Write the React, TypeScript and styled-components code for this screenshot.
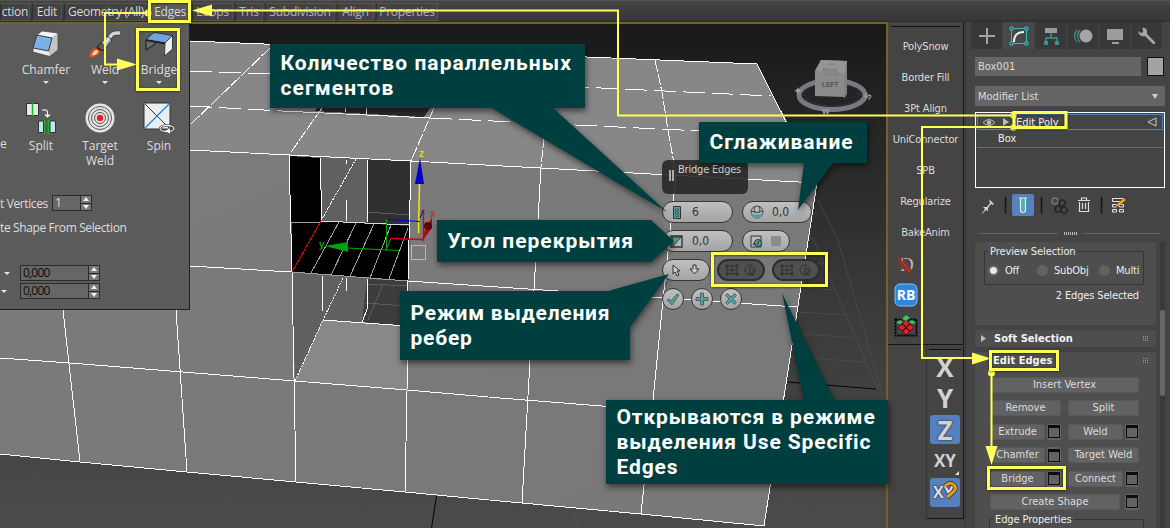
import React from "react";
import styled, { createGlobalStyle } from "styled-components";

const Global = createGlobalStyle`
  * { box-sizing: border-box; }
  body { margin: 0; background: #444; overflow: hidden; }
`;

const segoe = `"Open Sans", "Noto Sans", sans-serif`;
const tahoma = `"DejaVu Sans Condensed", "DejaVu Sans", sans-serif`;
const yellow = "#ffff57";
const teal = "#003f3f";

const Page = styled.div`
  position: relative;
  width: 1170px;
  height: 528px;
  overflow: hidden;
  display: flex;
  flex-direction: column;
  background: #444;
  color: #dcdcdc;
  font: 11px ${tahoma};
`;

/* ---------- ribbon ---------- */
const Ribbon = styled.div`
  height: 22px;
  flex: none;
  display: flex;
  gap: 2px;
  padding-top: 2px;
  background: linear-gradient(#454545, #363636);
  border-top: 1px solid #555;
  border-bottom: 1px solid #2c2c2c;
`;
const RibbonTab = styled.div<{ $w: number; $on?: boolean; $dim?: boolean }>`
  width: ${(p) => p.$w}px;
  height: 18px;
  border: 1px solid #545454;
  border-left-color: #2f2f2f;
  background: ${(p) => (p.$on ? "#5c5c5c" : "#424242")};
  color: ${(p) => (p.$dim ? "#b4b4b4" : "#d8d8d8")};
  font: 12px/16px ${segoe};
  letter-spacing: -0.25px;
  text-align: center;
  white-space: nowrap;
`;
const Body = styled.div`
  flex: 1;
  min-height: 0;
  display: flex;
`;

/* ---------- viewport ---------- */
const Viewport = styled.div`
  position: relative;
  width: 888px;
  flex: none;
  overflow: hidden;
  border-top: 2px solid #756326;
  border-right: 2px solid #756326;
`;
const Scene = styled.svg`
  position: absolute;
  left: 0;
  top: -24px;
`;
const RibbonPanel = styled.div`
  position: absolute;
  left: 0;
  top: -2px;
  width: 190px;
  height: 288px;
  display: flex;
  flex-direction: column;
  background: #5b5b5b;
  border-right: 1px solid #1f1f1f;
  border-bottom: 1px solid #1f1f1f;
  font: 12px/15px ${segoe};
  color: #dedede;
`;
const ToolRow = styled.div<{ $h: number; $cols: string; $top: number }>`
  display: grid;
  grid-template-columns: ${(p) => p.$cols};
  height: ${(p) => p.$h}px;
  padding-top: ${(p) => p.$top}px;
`;
const Tool = styled.div`
  display: flex;
  flex-direction: column;
  align-items: center;
  text-align: center;
  gap: 4px;
`;
const Down = styled.i`
  width: 0;
  border: 3px solid transparent;
  border-top-color: #e4e4e4;
  border-bottom: 0;
`;
const Clipped = styled.div`
  padding-top: 34px;
`;
const FieldLine = styled.div<{ $h: number; $gap?: number; $pad?: number }>`
  display: flex;
  align-items: center;
  height: ${(p) => p.$h}px;
  gap: ${(p) => p.$gap ?? 0}px;
  padding-left: ${(p) => p.$pad ?? 0}px;
  white-space: nowrap;
  letter-spacing: -0.38px;
`;
const Spinner = styled.div<{ $w: number; $dark?: boolean }>`
  width: ${(p) => p.$w}px;
  height: 16px;
  display: flex;
  border: 1px solid #2b2b2b;
  background: #666;
  color: ${(p) => (p.$dark ? "#0c0c0c" : "#dedede")};
  font: 12px/14px ${segoe};
  letter-spacing: -0.9px;
  letter-spacing: -0.8px;
  padding-left: 2px;
  justify-content: space-between;
`;
const Steps = styled.div`
  width: 11px;
  border-left: 1px solid #2b2b2b;
  display: flex;
  flex-direction: column;
  background: #777;
`;
const Step = styled.span<{ $down?: boolean }>`
  flex: 1;
  display: flex;
  align-items: center;
  justify-content: center;
  border-bottom: ${(p) => (p.$down ? "0" : "1px solid #2b2b2b")};
  &::after {
    content: "";
    border: 3px solid transparent;
    border-${(p) => (p.$down ? "top" : "bottom")}: 4px solid #eee;
    border-${(p) => (p.$down ? "bottom" : "top")}: 0;
  }
`;

/* ---------- caddy ---------- */
const Caddy = styled.div`
  position: absolute;
  left: 662px;
  top: 136px;
  width: 160px;
  display: flex;
  flex-direction: column;
  gap: 7px;
`;
const CaddyTitle = styled.div`
  width: 86px;
  height: 34px;
  border-radius: 6px;
  background: rgba(38, 38, 38, 0.88);
  color: #d5d5d5;
  font: 11px/19px ${tahoma};
  letter-spacing: -0.2px;
  white-space: nowrap;
  display: flex;
  gap: 4px;
  padding-left: 7px;
`;
const Grip = styled.i`
  width: 5px;
  height: 11px;
  margin-top: 10px;
  border: solid #aaa;
  border-width: 0 2px;
`;
const PillRow = styled.div<{ $gap: number }>`
  display: flex;
  gap: ${(p) => p.$gap}px;
`;
const Pill = styled.div<{ $w: number; $off?: boolean; $gap?: number }>`
  width: ${(p) => p.$w}px;
  height: 22px;
  border-radius: 11px;
  border: ${(p) => (p.$off ? "2px solid #2d2d2d" : "1px solid #363636")};
  background: ${(p) => (p.$off ? "#505050" : "linear-gradient(#c0c0c0, #a4a4a4)")};
  color: #333;
  display: flex;
  align-items: center;
  justify-content: ${(p) => (p.$gap ? "flex-start" : "space-evenly")};
  gap: ${(p) => p.$gap ?? 0}px;
  padding-left: ${(p) => (p.$gap ? (p.$gap > 9 ? 10 : 7) : 0)}px;
  font: 12px/20px ${tahoma};
`;

/* ---------- callouts ---------- */
const Note = styled.div<{ $x: number; $y: number; $w: number; $h: number; $ls: number }>`
  position: absolute;
  left: ${(p) => p.$x}px;
  top: ${(p) => p.$y}px;
  width: ${(p) => p.$w}px;
  height: ${(p) => p.$h}px;
  display: flex;
  align-items: center;
  padding-left: 10.5px;
  background: ${teal};
  color: #fff;
  font: bold 21px/25px Roboto, sans-serif;
  letter-spacing: ${(p) => p.$ls}px;
  white-space: pre;
`;
const Overlay = styled.svg<{ $shadow?: boolean }>`
  position: absolute;
  left: 0;
  top: 0;
  pointer-events: none;
  filter: ${(p) => (p.$shadow ? "drop-shadow(1px 3px 3px rgba(0, 0, 0, 0.55))" : "none")};
`;

/* ---------- script toolbars ---------- */
const Bars = styled.div`
  width: 77px;
  flex: none;
  display: flex;
  flex-direction: column;
  align-items: flex-end;
  padding-right: 1px;
  background: #444;
`;
const ScriptBar = styled.div`
  width: 76px;
  height: 323px;
  flex: none;
  border-right: 1px solid #161616;
  border-bottom: 1px solid #161616;
  padding: 4px 3px 0;
  display: flex;
  flex-direction: column;
`;
const Rule = styled.div`
  height: 1px;
  align-self: stretch;
  flex: none;
  background: #111;
`;
const Scripts = styled.div`
  padding-top: 4px;
  height: 217px;
  flex: none;
`;
const Script = styled.div`
  height: 31px;
  line-height: 31px;
  text-align: center;
  white-space: nowrap;
  letter-spacing: -0.15px;
`;
const ScriptIcon = styled.div`
  height: 31px;
  flex: none;
  display: flex;
  align-items: center;
  padding: 8px 0 0 3px;
`;
const AxisBar = styled.div`
  width: 38px;
  height: 173px;
  margin-top: 1px;
  border: solid #161616;
  border-width: 0 1px 1px;
  border-left-color: #353535;
  display: flex;
  flex-direction: column;
  align-items: center;
  padding: 3px 2px 0;
`;
const Axis = styled.div<{ $on?: boolean; $small?: boolean }>`
  width: 30px;
  height: 29px;
  margin-top: 2.4px;
  flex: none;
  border-radius: 3px;
  background: ${(p) => (p.$on ? "#5480bd" : "transparent")};
  color: #d2d2d2;
  display: flex;
  justify-content: center;
  align-items: center;
  font: ${(p) => (p.$small ? "bold 17px/20px" : "bold 26px/28px")} "Open Sans", sans-serif;
  text-shadow: ${(p) => (p.$on ? "0 0 2px #222, 0 0 1px #222" : "none")};
`;
const Flyout = styled.i`
  position: absolute;
  right: -2px;
  bottom: 0;
  border: 2px solid #ddd;
  border-top-color: transparent;
  border-left-color: transparent;
`;
const AxisCorner = styled.span`
  position: relative;
  padding: 4px 1px;
`;

/* ---------- command panel ---------- */
const Command = styled.div`
  width: 205px;
  flex: none;
  display: flex;
  flex-direction: column;
  padding: 0 5px;
  border-left: 1px solid #363636;
  background: #444;
`;
const Tabs = styled.div`
  height: 27px;
  display: flex;
  gap: 1px;
  background: #444;
`;
const Tab = styled.div<{ $on?: boolean }>`
  width: 31px;
  display: flex;
  align-items: center;
  justify-content: center;
  background: ${(p) => (p.$on ? "#484848" : "#383838")};
`;
const NameRow = styled.div<{ $top: number }>`
  display: flex;
  justify-content: space-between;
  margin: ${(p) => p.$top}px 0 0 4px;
`;
const Field = styled.div<{ $w: number; $h: number }>`
  width: ${(p) => p.$w}px;
  height: ${(p) => p.$h}px;
  display: flex;
  align-items: center;
  justify-content: space-between;
  padding: 0 7px 0 3px;
  background: #656565;
`;
const Pick = styled.i`
  border: 3.5px solid transparent;
  border-top: 5px solid #d0d0d0;
  border-bottom: 0;
`;
const Swatch = styled.div`
  width: 17px;
  height: 19px;
  margin-right: 1px;
  background: #a3a3a3;
  border: 1px solid #111;
`;
const Stack = styled.div`
  width: 190px;
  height: 76px;
  margin: 6px 0 0 4px;
  border: 1px solid #fff;
  background: #454545;
  padding: 1px;
  color: #f0f0f0;
`;
const StackTop = styled.div`
  height: 16px;
  border: 1px solid #4f7fb9;
  display: flex;
  align-items: center;
  padding-left: 4px;
  gap: 7px;
  & > :last-child { margin-left: auto; margin-right: 5px; }
`;
const StackItem = styled.div`
  height: 18px;
  line-height: 18px;
  padding-left: 21px;
  border-bottom: 1px solid #6a6a6a;
`;
const StackTools = styled.div`
  height: 42px;
  flex: none;
  padding-top: 2px;
`;
const Split = styled.div`
  height: 6px;
  margin: 0 4px 0 8px;
  display: flex;
  align-items: center;
  gap: 6px;
  &::before, &::after { content: ""; flex: 1; height: 1px; background: #626262; }
`;
const Dots = styled.i`
  width: 13px;
  height: 3px;
  background: repeating-linear-gradient(90deg, #bbb 0 1px, transparent 1px 2px);
`;
const Scroller = styled.div`
  flex: 1;
  min-height: 0;
  display: flex;
  gap: 3px;
  margin: 5px 0 0 3px;
`;
const Rollouts = styled.div`
  width: 183px;
  display: flex;
  flex-direction: column;
  gap: 3px;
`;
const Track = styled.div`
  width: 6px;
  border-radius: 3px;
  background: #393939;
  padding-top: 69px;
`;
const Thumb = styled.div`
  width: 5px;
  height: 86px;
  border-radius: 2px;
  background: #666;
`;
const Rollout = styled.div<{ $h: number }>`
  height: ${(p) => p.$h}px;
  flex: none;
  overflow: hidden;
  border: 1px solid #424242;
  border-radius: 2px;
  background: #4e4e4e;
`;
const Group = styled.fieldset<{ $h: number; $pad: number; $left: number }>`
  height: ${(p) => p.$h}px;
  margin: ${(p) => p.$pad}px 12px 0 ${(p) => p.$left}px;
  padding: 0 4px 0 3px;
  min-width: 0;
  border: 1px solid #343434;
  border-radius: 2px;
  color: #ececec;
`;
const Legend = styled.legend`
  padding: 0 2px;
  line-height: 13px;
  letter-spacing: -0.1px;
`;
const Radios = styled.div`
  display: grid;
  grid-template-columns: 49px 62px auto;
  height: 24px;
  align-items: center;
`;
const Radio = styled.span<{ $on?: boolean }>`
  display: flex;
  align-items: center;
  gap: 6px;
  letter-spacing: -0.2px;
  &::before {
    content: "";
    width: 11px;
    height: 11px;
    border-radius: 50%;
    background: ${(p) => (p.$on ? "radial-gradient(#e8e8e8 0 3px, #666 4px)" : "#626262")};
  }
`;
const Picked = styled.div`
  text-align: right;
  padding: 4px 17px 0 0;
  letter-spacing: -0.15px;
  color: #eee;
`;
const Heading = styled.div<{ $indent: number }>`
  height: 17px;
  display: flex;
  align-items: center;
  gap: 8px;
  padding: 0 7px 0 ${(p) => p.$indent}px;
  font: bold 11px ${tahoma};
  color: #f4f4f4;
  letter-spacing: 0.05px;
  & > :last-child { margin-left: auto; }
`;
const Buttons = styled.div`
  margin: 8px 17px 0 15px;
  display: grid;
  grid-template-columns: 71px 71px;
  column-gap: 7px;
  row-gap: 7.4px;
`;
const Cell = styled.div<{ $wide?: boolean }>`
  display: flex;
  gap: ${(p) => (p.$wide ? 5 : 2)}px;
  grid-column: ${(p) => (p.$wide ? "1 / -1" : "auto")};
`;
const Button = styled.div`
  flex: 1;
  height: 16px;
  border-radius: 2px;
  background: #626262;
  border: 1px solid #595959;
  line-height: 14px;
  text-align: center;
  white-space: nowrap;
  color: #dcdcdc;
`;
const Settings = styled.div`
  width: 14px;
  height: 16px;
  border-radius: 2px;
  background: #626262;
  display: flex;
  align-items: center;
  justify-content: center;
  &::before {
    content: "";
    width: 10px;
    height: 9px;
    border: 1px solid #0c0c0c;
    border-top-width: 3px;
  }
`;

const Spin = ({ w, dark, children }: { w: number; dark?: boolean; children: React.ReactNode }) => (
  <Spinner $w={w} $dark={dark}>
    {children}
    <Steps><Step /><Step $down /></Steps>
  </Spinner>
);

const HeadDots = () => (
  <svg width="6" height="5" shapeRendering="crispEdges">
    <path d="M0 .5h6M0 2.500h6M0 4.500h6" stroke="#9c9c9c" strokeDasharray="1 1" />
  </svg>
);

const ChamferIcon = () => (
  <svg width="28" height="28" viewBox="0 0 28 28">
    <path d="M5 5l5-4 16 2-6 5z" fill="#f6f6f6" />
    <path d="M20 8l6-5v17l-8 6-1-6z" fill="#c4c4c4" />
    <path d="M1 18l16 3 1 5.500L1 22z" fill="#eee" />
    <path d="M5 5l15 3-3.500 13L1 18z" fill="#78b0e8" stroke="#333" strokeWidth=".9" />
    <path d="M5 5l5-4 16 2v17l-8 6.500L1 22v-4" fill="none" stroke="#444" strokeWidth=".7" />
  </svg>
);
const WeldIcon = () => (
  <svg width="34" height="28" viewBox="0 0 34 28">
    <path d="M32 3c-7-.5-9 1-11 6" fill="none" stroke="#3a3f43" strokeWidth="5" />
    <path d="M32 3c-7-.5-9 1-11 6" fill="none" stroke="#cfd6da" strokeWidth="3.500" />
    <path d="M19 6l5 4-6 8-6-4z" fill="#a9b3ba" stroke="#333" />
    <path d="M21 8l-6 8" stroke="#eef2f4" strokeWidth="1.500" />
    <path d="M13 13l5 4-3 4-6-4z" fill="#565c60" stroke="#222" />
    <path d="M9 17l4 3-1 2-5-2z" fill="#26292b" />
    <path d="M1 27.500c1-7 5-10 8-9l3.500 2.500c-1 4-5 6-11.500 6.500z" fill="#e9501f" />
    <path d="M4 25.500c1-4 3-6 6-5 0 3-2 4.500-6 5z" fill="#fbd9a0" />
  </svg>
);
const BridgeIcon = () => (
  <svg width="30" height="28" viewBox="0 0 30 28">
    <path d="M2 9.500v10.500l9-6v-4z" fill="#6c6c6c" stroke="#161616" />
    <path d="M2 9.500l8-7 18.500 3-7.500 7.500z" fill="#6fa6de" stroke="#222" strokeWidth=".8" />
    <path d="M21 13l7.500-7.500v13.500l-8 7z" fill="#efefef" stroke="#222" strokeWidth=".8" />
    <path d="M2 9.500l19 3v2L2 11z" fill="#222" />
  </svg>
);
const SplitIcon = () => (
  <svg width="32" height="32" viewBox="0 0 32 32">
    <rect x="1.500" y="1.500" width="12" height="12" fill="#e8e8e8" stroke="#333" />
    <path d="M7.500 1v13M19.500 18v14M23.500 18v14" stroke="#17b81f" strokeWidth="1.500" />
    <path d="M13.500 19h5v11.500h-5zM25 19h5.500v11.500H25z" fill="#bfe6f4" stroke="#333" />
    <path d="M17 8h3.500q2 0 2 3v4M20 12.500l2.500 2.500 2.500-2.500" fill="none" stroke="#fff" strokeWidth="1.200" />
  </svg>
);
const TargetIcon = () => (
  <svg width="32" height="32" viewBox="0 0 32 32">
    <circle cx="16" cy="16" r="14.500" fill="#e6e6e6" />
    <circle cx="16" cy="16" r="11.500" fill="none" stroke="#555" />
    <circle cx="16" cy="16" r="8.500" fill="none" stroke="#555" />
    <circle cx="16" cy="16" r="5.500" fill="none" stroke="#555" />
    <circle cx="16" cy="16" r="3.200" fill="#e32222" />
  </svg>
);
const SpinIcon = () => (
  <svg width="32" height="32" viewBox="0 0 32 32">
    <rect x="1" y="1" width="26" height="26" fill="#ededed" stroke="#333" />
    <path d="M2 2l24 24" stroke="#333" />
    <path d="M26 2L2 26" stroke="#1687e8" strokeWidth="1.300" />
    <ellipse cx="24" cy="26.500" rx="7" ry="3" fill="none" stroke="#333" strokeWidth="2.600" />
    <ellipse cx="24" cy="26.500" rx="7" ry="3" fill="none" stroke="#eee" strokeWidth="1.300" />
    <path d="M27 26.500l-5 2.500 5 2.500z" fill="#fff" />
  </svg>
);

const W = "#fff";
const SceneArt = () => (
  <Scene width="888" height="528" viewBox="0 0 888 528">
    <defs>
      <linearGradient id="bg" x1="0" y1="0" x2="0" y2="1">
        <stop offset="0.040" stopColor="#191919" />
        <stop offset="0.600" stopColor="#3b3b3b" />
        <stop offset="1" stopColor="#4b4b4b" />
      </linearGradient>
      <linearGradient id="front" x1="0" y1="0" x2="1" y2="1">
        <stop offset="0" stopColor="#7b7b7b" />
        <stop offset="1" stopColor="#787878" />
      </linearGradient>
    </defs>
    <rect width="888" height="528" fill="url(#bg)" />
    <g stroke="#575757" fill="none" strokeWidth=".8">
      <path d="M810 238h3l65 152M812 262l18 2M806 287l28 3M798 312l47 3M803 334l51 4M793 357l72 5M818 200l20 40 45 157" opacity=".7" />
      <path d="M0 476l436 40M0 508l250 20M46 463l-36 52M106 475l-40 53M172 474l-23 48M237 483l-20 46M301 485l-15 43M368 490l-8 38M520 505l-2 23M575 510l2 18M782 484l6 44M845 484l15 40M770 500l116 12" opacity=".3" />
    </g>
    <path d="M436.500 496l-5 32M787 382l89 7" stroke="#050505" />
    <path d="M0 33l270 11 318 13 169 7 60 119L411 161 0 141z" fill="#878787" />
    <path d="M0 141l411 20 406 22-53 343L0 454z" fill="url(#front)" />
    <g shapeRendering="crispEdges">
      <path d="M317 108l-2 3 109 6 6-9z" fill="#2c2c2c" />
      <path d="M289 156l122 5-4 229-112-9-3-109z" fill="#606060" />
      <path d="M289 156l31 2 1 64-30 1z" fill="#000" />
      <path d="M367 160l44 1-2 65-42-2z" fill="#303030" />
      <path d="M367 279l41 2-1 45-45-4z" fill="#3d3d3d" />
      <path d="M323 320l84 6v64l-112-9z" fill="#888" />
      <path d="M320 221l89 5-1 55-116-9v-49z" fill="#000" />
      <path d="M367 212l42 3M367 284l41 2M365 303l42 3M383 284l-15 36" stroke="#5b5b5b" fill="none" />
      <path d="M339 222l-28 51M356 223l-25 52M374 224l-24 52M391 225l-21 53M408 228l-19 51M291 222l29 1M292 272l116 9" stroke="#a0a0a0" fill="none" />
      <path d="M321 221l88 4" stroke="#ddd" />
      <path d="M321 221l-29 51" stroke="#e00000" />
      <g stroke={W} fill="none">
        <path d="M190 41l397 16 170 7 60 119M190 150l99 5 122 6 406 22M817 183l-53 343" />
        <path d="M190 71l80 3 310 13 191 9M190 106l92 5M430 118l355 17" strokeDasharray="22 7" />
        <path d="M282 111l148 7" />
        <path d="M270 48l-80 77M322 108l-33 47M434 108l-23 53M547 108l-6 59M655 60l7 32 6 38 8 45" strokeDasharray="12 2" />
        <path d="M190 266l101 6M408 281l389 26M0 358l70 5 225 18 112 9 93 8 280 22M0 454l80 8 107 10 109 10 109 10 95 9 141 13 123 12" />
        <path d="M63 310l17 152M176 310l11 162M289 155l3 117 4 210M411 161l-3 119-1 112-2 100M541 167l-11 193-8 143M676 175l-13 125-10 100-12 114" />
        <path d="M320 158l2 62M367 160v62M346 160v4M346 200v21M322 276v35M346 278v13M367 279v30l-5 14M323 320l84 6" />
        <path d="M356 159l-34 60M343 278l-20 42-28 61" strokeDasharray="2 1" />
        <path d="M345 108v4M366 108v6" />
      </g>
      <path d="M411.500 245.500h14v14h-14z" fill="none" stroke="#b8b8b8" />
    </g>
    <path d="M419.500 184l-1 49" stroke="#f4ee00" strokeWidth="1.500" />
    <path d="M420 158l-5 26h9z" fill="#0000c8" />
    <path d="M387 219.500l33 2M420 218l3-8" stroke="#0000d8" fill="none" />
    <path d="M386.500 219v31M347 248l52 2.500M387 248l4-10" stroke="#00a800" fill="none" />
    <path d="M325 246l23-4v10z" fill="#00a010" />
    <path d="M390 238.500l32 1M423.500 210v28M423 241l5-17" stroke="#d00010" fill="none" strokeWidth="1.300" />
    <path d="M432 217l-8 15-2 9 10-13z" fill="#c00010" />
    <ellipse cx="428" cy="226" rx="4" ry="4" fill="#5c0008" />
    <g fontFamily="Liberation Sans" fontSize="10" fontWeight="bold">
      <text x="419" y="157" fill="#e0d820">z</text>
      <text x="319" y="248" fill="#0ba012">y</text>
      <text x="430" y="217" fill="#b8323a">x</text>
    </g>
    {/* view cube */}
    <ellipse cx="832" cy="95" rx="33" ry="14.500" fill="#252525" fillOpacity=".5" stroke="#777a80" strokeWidth="5" />
    <ellipse cx="832" cy="94.500" rx="28" ry="11.500" fill="none" stroke="#555" strokeDasharray="1 2" />
    <path d="M815 71l6-11 26 1-2 36-30-1z" fill="#8a8a8a" />
    <path d="M815 71l6-11 26 1-2 12z" fill="#959595" />
    <path d="M845 73l2-12v33l-3 5z" fill="#7d7d7d" />
    <g fontFamily="Liberation Sans" fontWeight="bold" fill="#555">
      <text x="822" y="87" fontSize="7" letterSpacing="-.3">LEFT</text>
      <path d="M828 65l4-2 3 2M823 69h14v6h-14z" fill="#858890" stroke="#777" strokeWidth=".5" />
      <text x="794" y="94" fontSize="9" fill="#a5a5a5">✦</text>
      <text x="864" y="100" fontSize="9" fill="#a5a5a5" transform="rotate(-60 867 96)">S</text>
      <text x="822" y="114" fontSize="8" fill="#a5a5a5">W</text>
    </g>
  </Scene>
);

const ScriptIcons = () => (
  <>
    <ScriptIcon>
      <svg width="24" height="26" viewBox="0 0 24 26">
        <text x="6" y="20" fontFamily="Liberation Serif" fontSize="19" fill="#bbb">D</text>
        <path d="M1 1l8 9 0-6 4 11 1-5 5 14-7-3-5-5-4-3 3 0z" fill="#8b2f2d" />
        <path d="M7 9l9 12" stroke="#b5524c" />
      </svg>
    </ScriptIcon>
    <ScriptIcon>
      <svg width="24" height="24" viewBox="0 0 24 24">
        <rect x="1" y="1" width="22" height="22" rx="5" fill="#2f86dd" stroke="#8dbdec" />
        <text x="12" y="17" textAnchor="middle" fontFamily="Open Sans" fontWeight="bold" fontSize="14" fill="#fff">RB</text>
      </svg>
    </ScriptIcon>
    <ScriptIcon>
      <svg width="24" height="24" viewBox="0 0 24 24">
        <path d="M1.500 5.500h21v16h-21z" fill="none" stroke="#000" strokeWidth="2" strokeDasharray="2 1" />
        <g fill="#e01e28" stroke="#350608" strokeWidth=".8">
          <path d="M12 6l4 3.500-4 3.500-4-3.500zM8 10l4 3.500L8 17l-4-3.500zM16 10l4 3.500-4 3.500-4-3.500zM12 14l4 3.500-4 3.500-4-3.500z" />
        </g>
        <path d="M2 9l4-3 3 2-3 2zM22 9l-4-3-3 2 3 2zM8 5l4-4 4 3-4 3z" fill="#35c760" />
      </svg>
    </ScriptIcon>
  </>
);

const tabIcons = [
  <path key="a" d="M13 5v16M5 13h16" stroke="#a5a5a5" strokeWidth="2" />,
  <g key="b" fill="none" stroke="#35c4c4"><path d="M7 5.500h12M7 20.500h12M5.500 7v12M20.500 7v12" strokeWidth=".9" /><path d="M4 4h3v3H4zM19 4h3v3h-3zM4 19h3v3H4zM19 19h3v3h-3z" /><path d="M8 19c0-7 3-10 10-10" stroke="#eee" strokeWidth="2" /></g>,
  <g key="c" fill="none" stroke="#3b9292" strokeWidth="1.500"><path d="M7 5h12v5H7z" fill="#9a9a9a" stroke="none" /><path d="M13 10v5M8 19v-4h11v4" /><path d="M6 18h4v4H6zM17 18h4v4h-4z" fill="#3b9292" stroke="none" /></g>,
  <g key="d" fill="none" stroke="#3b9292" strokeWidth="1.200"><circle cx="16" cy="13" r="6.500" fill="#a5a5a5" stroke="none" /><path d="M10 7q-5 6 0 12M7 7q-5 6 0 12" /></g>,
  <path key="e" d="M5 6h16v11H5zM10 19h7v2h-7z" fill="#9c9c9c" />,
  <path key="f" d="M8 5q4-1 5 3v3l8 8q1 2-2 2l-8-8q-4 1-6-2l-1-3 3 2 2-1V7z" fill="#a5a5a5" />,
];

const StackIcons = () => (
  <svg width="194" height="30" viewBox="971 189 194 30">
    <path d="M989 198l5 5-1 1-2-1-3 4v3l-2-1-5 5 4-6-2-2h4l3-4z" fill="#d5d5d5" />
    <path d="M1005.500 196v17M1041.500 196v17M1101.500 196v17" stroke="#161616" strokeWidth="1.500" />
    <rect x="1012" y="193" width="22" height="22" rx="2" fill="#5682bd" />
    <path d="M1020.500 197h5v13h-5z" fill="#49b4ae" />
    <path d="M1019 197h8M1020.500 197v13q2.500 3 5 0v-13" fill="none" stroke="#e8e8e8" strokeWidth="1.200" />
    <g fill="none" stroke="#252525" strokeWidth="1.400"><circle cx="1055" cy="200" r="3" stroke="#777" /><circle cx="1062" cy="202" r="3" /><circle cx="1058" cy="208" r="3" /><circle cx="1064" cy="209" r="3" /></g>
    <path d="M1078 199.500h12M1081.500 199v-2h5v2M1079.500 201v9.500h9V201M1082.500 202v6M1085.500 202v6" fill="none" stroke="#ddd" strokeWidth="1.200" />
    <path d="M1112.500 197.500h11v3h-11zM1112.500 203.500h4v2.500h-4zM1119.500 203.500h4v2.500h-4zM1112.500 208.500h4v2.500h-4zM1119.500 208.500h4v2.500h-4z" fill="none" stroke="#e5e5e5" />
    <path d="M1124 197l2 2-7 6-3 1 1-3z" fill="#f4a72c" stroke="#444" strokeWidth=".4" />
  </svg>
);

const Act = ({ label, set, wide }: { label: string; set?: boolean; wide?: boolean }) => (
  <Cell $wide={wide}>
    <Button>{label}</Button>
    {set && <Settings />}
  </Cell>
);

const Tail = ({ points }: { points: string }) => <polygon points={points} fill={teal} />;

const Annotations = () => (
  <Overlay width="1170" height="528" viewBox="0 0 1170 528">
    <defs>
      <filter id="glow" x="-10%" y="-10%" width="120%" height="120%">
        <feDropShadow dx="0" dy="0.500" stdDeviation="1" floodColor="#000" floodOpacity=".6" />
      </filter>
    </defs>
    <g fill="none" stroke={yellow} strokeWidth="2">
      <path d="M1013 115.500H618V10.500H210M1014 127H922V358H975M991.500 374v72M148 13H105V64.500H118" />
    </g>
    <g fill={yellow}>
      <path d="M192 10.500l20-6v12zM991 358.500l-19-6v12zM991.500 465l-6-19h12zM137 64.500l-20-6v12z" />
      <circle cx="148" cy="13" r="3.500" />
      <circle cx="1013.500" cy="115.500" r="3.200" />
      <circle cx="1013.500" cy="127.500" r="3.200" />
      <circle cx="991.500" cy="373" r="3.500" />
    </g>
    <g fill="none" stroke={yellow} strokeWidth="3" filter="url(#glow)">
      <path d="M149.500 1.500h40v20h-40zM137.500 29.500h41v60h-41zM1014 112.500h52v15h-52zM990.500 351.500h67v18h-67zM988.500 467.500h76v21h-76zM712.500 253.500h114v32h-114z" />
    </g>
  </Overlay>
);

export default function App() {
  return (
    <Page>
      <Global />
      <Ribbon>
        <RibbonTab $w={30}>ction</RibbonTab>
        <RibbonTab $w={30}>Edit</RibbonTab>
        <RibbonTab $w={84}>Geometry (All)</RibbonTab>
        <RibbonTab $w={40} $on>Edges</RibbonTab>
        <RibbonTab $w={41} $dim>Loops</RibbonTab>
        <RibbonTab $w={28} $dim>Tris</RibbonTab>
        <RibbonTab $w={70} $dim>Subdivision</RibbonTab>
        <RibbonTab $w={37} $dim>Align</RibbonTab>
        <RibbonTab $w={62} $dim>Properties</RibbonTab>
      </Ribbon>
      <Body>
        <Viewport>
          <SceneArt />
          <RibbonPanel>
            <ToolRow $cols="16px 60px 58px 50px" $h={78} $top={8}>
              <span />
              <Tool><ChamferIcon /><span>Chamfer</span><Down /></Tool>
              <Tool><WeldIcon /><span>Weld</span><Down /></Tool>
              <Tool><BridgeIcon /><span>Bridge</span><Down /></Tool>
            </ToolRow>
            <ToolRow $cols="12px 58px 60px 58px" $h={94} $top={2}>
              <Clipped>e</Clipped>
              <Tool><SplitIcon /><span>Split</span></Tool>
              <Tool><TargetIcon /><span>Target<br />Weld</span></Tool>
              <Tool><SpinIcon /><span>Spin</span></Tool>
            </ToolRow>
            <FieldLine $h={18} $gap={4}>t Vertices<Spin w={40}>1</Spin></FieldLine>
            <FieldLine $h={30}>te Shape From Selection</FieldLine>
            <FieldLine $h={22} />
            <FieldLine $h={18} $gap={10} $pad={4}><Down /><Spin w={80} dark>0,000</Spin></FieldLine>
            <FieldLine $h={18} $gap={13} $pad={1}><Down /><Spin w={80} dark>0,000</Spin></FieldLine>
          </RibbonPanel>
          <Caddy>
            <CaddyTitle><Grip />Bridge Edges</CaddyTitle>
            <PillRow $gap={9}>
              <Pill $w={71} $gap={11}>
                <svg width="8" height="13"><path d="M.5.500h7v12h-7z" fill="#4fa3a0" stroke="#333" /><path d="M2.500 3h3v1.500h-3zM2.500 6h3v1.500h-3zM2.500 9h3v1.500h-3z" fill="#9cc" stroke="#333" strokeWidth=".7" /></svg>
                <span>6</span>
              </Pill>
              <Pill $w={70} $gap={8}>
                <svg width="14" height="14"><circle cx="7" cy="7" r="6" fill="#b8b8b8" stroke="#444" /><path d="M1 8q6 3 12 0-1 5-6 5T1 8z" fill="#4fa3a0" /><path d="M1 6q6 3 12 0M5 1q-2 4 0 7M9 1q2 4 0 7" fill="none" stroke="#444" /></svg>
                <span>0,0</span>
              </Pill>
            </PillRow>
            <PillRow $gap={9}>
              <Pill $w={71} $gap={9}>
                <svg width="13" height="13"><path d="M1 1h11v11H1z" fill="#bbb" stroke="#333" strokeWidth="1.400" /><path d="M2 2h9L3 11z" fill="#4fa3a0" stroke="#333" /></svg>
                <span>0,0</span>
              </Pill>
              <Pill $w={48} $gap={8}>
                <svg width="13" height="13"><path d="M1 1h10v11H1z" fill="#bbb" stroke="#333" /><circle cx="8" cy="8" r="3.500" fill="#4fa3a0" stroke="#333" /><path d="M3 10l1-2 1 2M7 10l2-4" stroke="#333" fill="none" /></svg>
                <svg width="10" height="10"><rect width="10" height="10" fill="#8c8c8c" /></svg>
              </Pill>
            </PillRow>
            <PillRow $gap={7}>
              <Pill $w={48}>
                <svg width="9" height="13"><path d="M1 1v9l2-2 2 4 2-1-2-4h3z" fill="#ccc" stroke="#333" /></svg>
                <svg width="11" height="12"><path d="M4 1h3v4h3l-4.500 5L1 5h3z" fill="#ccc" stroke="#333" /></svg>
              </Pill>
              {[0, 1].map((i) => (
                <Pill $w={48} $off key={i}>
                  <svg width="14" height="13" fill="none" stroke="#303030"><path d="M2 2h10v8H2zM1 1h2v2H1zM11 1h2v2h-2zM1 9h2v2H1zM11 9h2v2h-2zM2 6h10M7 2v8" /></svg>
                  <svg width="13" height="13" fill="none" stroke="#303030"><circle cx="6" cy="6" r="5" /><path d="M6 3v7l2-1 2 3M6 3l5 5H8" /></svg>
                </Pill>
              ))}
            </PillRow>
            <PillRow $gap={7}>
              <Pill $w={22}><svg width="14" height="14" viewBox="0 0 14 14"><path d="M1 8l2-1 2 2 6-7 2 1-7 10z" fill="#4fa3a0" stroke="#444" strokeWidth=".7" /></svg></Pill>
              <Pill $w={22}><svg width="14" height="14" viewBox="0 0 14 14"><path d="M5.500 1h3v4.500H13v3H8.500V13h-3V8.500H1v-3h4.500z" fill="#4fa3a0" stroke="#444" strokeWidth=".7" /></svg></Pill>
              <Pill $w={22}><svg width="14" height="14" viewBox="0 0 14 14"><path d="M1.500 3.500l2-2L7 5l3.500-3.500 2 2L9 7l3.500 3.500-2 2L7 9l-3.500 3.500-2-2L5 7z" fill="#4fa3a0" stroke="#444" strokeWidth=".7" /></svg></Pill>
            </PillRow>
          </Caddy>
        </Viewport>
        <Bars>
          <ScriptBar>
            <Rule />
            <Scripts>
              {["PolySnow", "Border Fill", "3Pt Align", "UniConnector", "SPB", "Regularize", "BakeAnim"].map((s) => (
                <Script key={s}>{s}</Script>
              ))}
            </Scripts>
            <ScriptIcons />
          </ScriptBar>
          <AxisBar>
            <Rule />
            <Axis>X</Axis>
            <Axis>Y</Axis>
            <Axis $on>Z</Axis>
            <Axis $small><AxisCorner>XY<Flyout /></AxisCorner></Axis>
            <Axis $small $on>
              <svg width="26" height="24" viewBox="0 0 26 24">
                <text x="1" y="18" fontFamily="Open Sans" fontSize="16" fontWeight="bold" fill="#ddd">XY</text>
                <path d="M13 6q5-5 9-1t-3 9l-4 3" fill="none" stroke="#333" strokeWidth="4.500" />
                <path d="M13 6q5-5 9-1t-3 9l-4 3" fill="none" stroke="#e39b21" strokeWidth="3" />
              </svg>
            </Axis>
          </AxisBar>
        </Bars>
        <Command>
          <Tabs>
            {tabIcons.map((icon, i) => (
              <Tab $on={i === 1} key={i}><svg width="26" height="26" viewBox="0 0 26 26">{icon}</svg></Tab>
            ))}
          </Tabs>
          <NameRow $top={8}>
            <Field $w={166} $h={19}>Box001</Field>
            <Swatch />
          </NameRow>
          <NameRow $top={10}>
            <Field $w={190} $h={20}>Modifier List<Pick /></Field>
          </NameRow>
          <Stack>
            <StackTop>
              <svg width="14" height="9"><path d="M1 4.500q6-6 12 0-6 6-12 0z" fill="none" stroke="#bbb" /><circle cx="7" cy="4.500" r="2.300" fill="#bbb" /></svg>
              <svg width="6" height="8"><path d="M0 0l6 4-6 4z" fill="#bbb" /></svg>
              <span>Edit Poly</span>
              <svg width="10" height="10"><path d="M9 1v8L1 5z" fill="none" stroke="#ccc" /></svg>
            </StackTop>
            <StackItem>Box</StackItem>
          </Stack>
          <StackTools><StackIcons /></StackTools>
          <Split><Dots /></Split>
          <Scroller>
            <Rollouts>
              <Rollout $h={85}>
                <Group $h={40} $pad={3} $left={9}>
                  <Legend>Preview Selection</Legend>
                  <Radios>
                    <Radio $on>Off</Radio>
                    <Radio>SubObj</Radio>
                    <Radio>Multi</Radio>
                  </Radios>
                </Group>
                <Picked>2 Edges Selected</Picked>
              </Rollout>
              <Rollout $h={19}>
                <Heading $indent={6}><svg width="5" height="7"><path d="M0 0l5 3.500L0 7z" fill="#bbb" /></svg>Soft Selection<HeadDots /></Heading>
              </Rollout>
              <Rollout $h={190}>
                <Heading $indent={18}>Edit Edges<HeadDots /></Heading>
                <Buttons>
                  <Act label="Insert Vertex" wide />
                  <Act label="Remove" />
                  <Act label="Split" />
                  <Act label="Extrude" set />
                  <Act label="Weld" set />
                  <Act label="Chamfer" set />
                  <Act label="Target Weld" />
                  <Act label="Bridge" set />
                  <Act label="Connect" set />
                  <Act label="Create Shape" set wide />
                </Buttons>
                <Group $h={40} $pad={3} $left={14}>
                  <Legend>Edge Properties</Legend>
                </Group>
              </Rollout>
            </Rollouts>
            <Track><Thumb /></Track>
          </Scroller>
        </Command>
      </Body>
      <Overlay width="1170" height="528" viewBox="0 0 1170 528" $shadow>
        <Tail points="490,107 552,107 667,212" />
        <Tail points="270,44 585,44 585,108 270,108" />
        <Tail points="699,122 867,122 867,163 833,163 798,210 804,163 699,163" />
        <Tail points="437,220 651,220 674,241 651,262 437,262" />
        <Tail points="400,291 608,291 669,274 630,327 630,360 400,360" />
        <Tail points="606,400 804,400 782,293 834,400 888,400 888,484 606,484" />
      </Overlay>
      <Note $x={270} $y={44} $w={315} $h={64} $ls={1.05}>{"Количество параллельных\nсегментов"}</Note>
      <Note $x={699} $y={122} $w={168} $h={41} $ls={0.97}>Сглаживание</Note>
      <Note $x={437} $y={220} $w={208} $h={42} $ls={1}>Угол перекрытия</Note>
      <Note $x={400} $y={291} $w={230} $h={69} $ls={0.75}>{"Режим выделения\nребер"}</Note>
      <Note $x={606} $y={400} $w={282} $h={84} $ls={0.87}>{"Открываются в режиме\nвыделения Use Specific\nEdges"}</Note>
      <Annotations />
    </Page>
  );
}
